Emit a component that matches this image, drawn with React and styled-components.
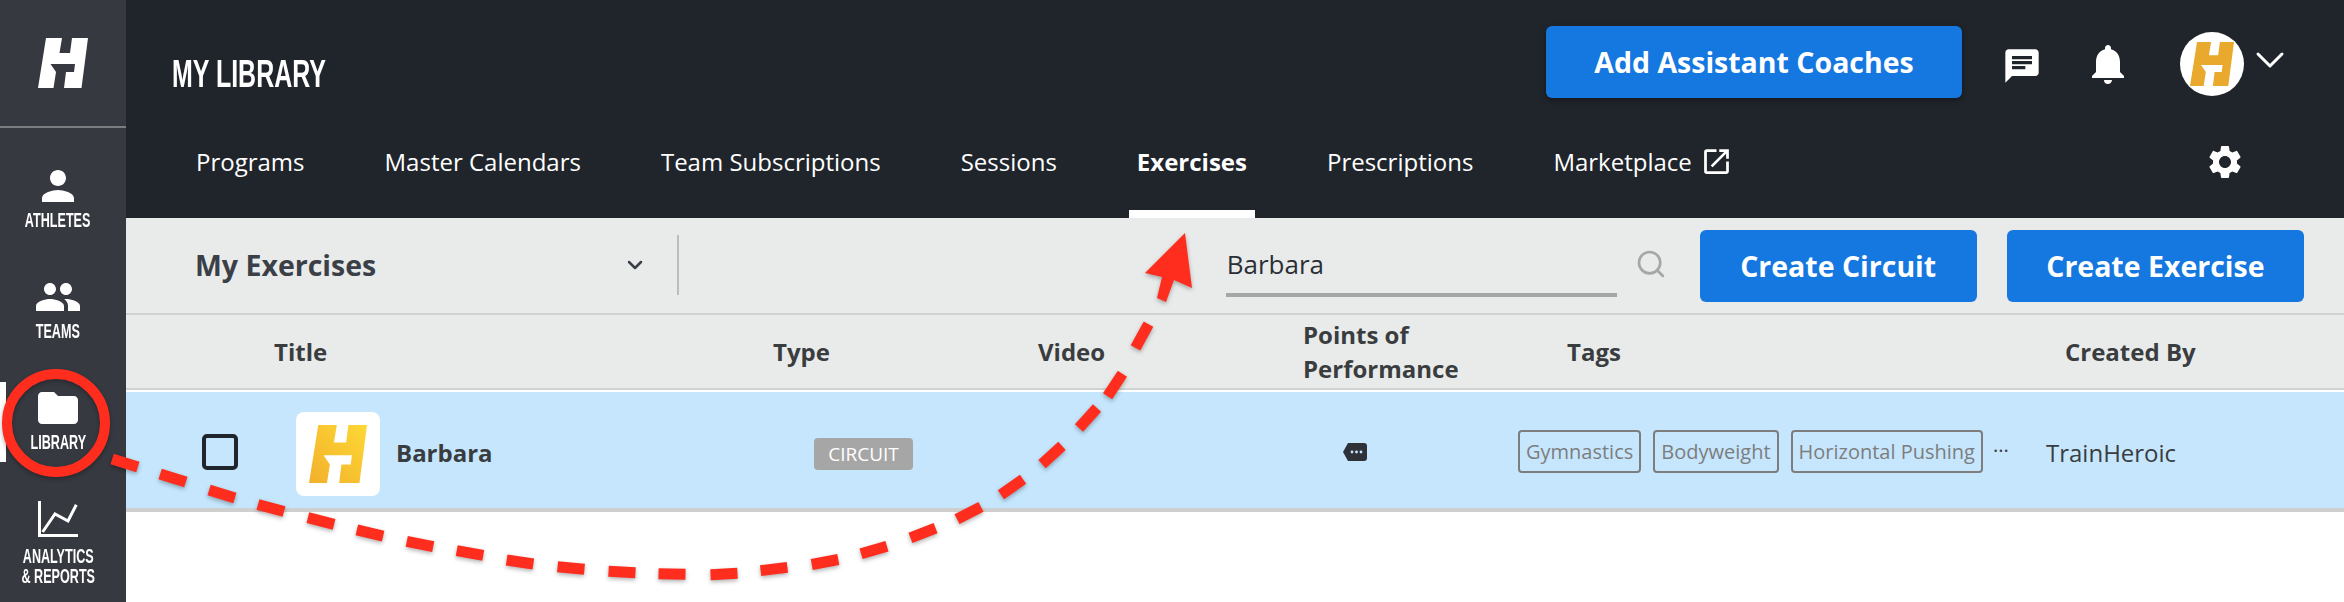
import React from "react";
import styled, { createGlobalStyle } from "styled-components";
import {
	MdChat,
	MdNotifications,
	MdPerson,
	MdPeople,
	MdFolder,
	MdSettings,
	MdOpenInNew,
} from "react-icons/md";
import { ChevronDown, Search } from "lucide-react";

const GlobalStyle = createGlobalStyle`
	html, body {
		margin: 0;
		background: #fff;
		font-family: "Open Sans", sans-serif;
	}
	* {
		box-sizing: border-box;
	}
`;

const BLUE = "#1577e0";

const Page = styled.div`
	position: relative;
	display: flex;
	width: 2344px;
	height: 602px;
	overflow: hidden;
`;

const Sidebar = styled.aside`
	flex: 0 0 126px;
	min-width: 0;
	background: #363940;
	color: #fff;
`;

const LogoCell = styled.div`
	display: flex;
	align-items: center;
	justify-content: center;
	height: 128px;
	border-bottom: 2px solid #7c7d80;
`;

const SideNav = styled.nav`
	padding-top: 34px;
`;

const SideItem = styled.div`
	position: relative;
	display: flex;
	flex-direction: column;
	align-items: center;
	height: 111px;
	padding-right: 10px;
`;

const ActiveMark = styled.span`
	position: absolute;
	left: 0;
	top: -2px;
	width: 6px;
	height: 80px;
	background: #fff;
`;

// no condensed poster font here, so the bold sans gets squeezed
const SideLabel = styled.span`
	font-family: "Liberation Sans", sans-serif;
	font-weight: 700;
	font-size: 21px;
	line-height: 20px;
	text-align: center;
	white-space: nowrap;
	transform: scaleX(0.6);
`;

const Main = styled.main`
	flex: 1;
	min-width: 0;
`;

const Header = styled.header`
	height: 218px;
	background: #20252c;
	color: #fff;
`;

const TopRow = styled.div`
	display: flex;
	justify-content: space-between;
	height: 106px;
	padding: 0 50px 0 46px;
`;

const PageTitle = styled.h1`
	margin: 0;
	padding-top: 52px;
	font-family: "Liberation Sans", sans-serif;
	font-weight: 700;
	font-size: 39px;
	line-height: 44px;
	white-space: nowrap;
	transform: scaleX(0.64);
	transform-origin: left top;
`;

const TopActions = styled.div`
	display: flex;
	align-items: center;
	height: 124px;
`;

const Button = styled.button`
	height: 72px;
	padding: 0;
	width: ${(p) => p.$width}px;
	margin-left: ${(p) => p.$left || 0}px;
	border: 0;
	border-radius: 6px;
	background: ${BLUE};
	color: #fff;
	font-family: "Open Sans", sans-serif;
	font-weight: 700;
	font-size: 28.5px;
	box-shadow: ${(p) => (p.$raised ? "0 2px 6px rgba(0, 0, 0, 0.4)" : "none")};
`;

const ChatIcon = styled(MdChat)`
	margin: 8px 0 0 40px;
`;

const BellIcon = styled(MdNotifications)`
	margin: 4px 0 0 42px;
`;

const Avatar = styled.span`
	display: flex;
	align-items: center;
	justify-content: center;
	width: 64px;
	height: 64px;
	margin: 4px 0 0 48px;
	border-radius: 50%;
	background: #fff;
`;

const AvatarChevron = styled(ChevronDown)`
	margin: -4px 0 0 2px;
`;

const TabRow = styled.nav`
	display: flex;
	align-items: flex-start;
	height: 112px;
	padding: 0 99px 0 62px;
`;

const Tab = styled.a`
	display: flex;
	align-items: center;
	gap: 8px;
	height: 112px;
	margin-right: 64px;
	padding: 6px 8px 0;
	border-bottom: 8px solid ${(p) => (p.$active ? "#fff" : "transparent")};
	font-size: 24px;
	font-weight: ${(p) => (p.$active ? 700 : 400)};
	white-space: nowrap;
`;

const GearIcon = styled(MdSettings)`
	margin: 36px 0 0 auto;
`;

const Toolbar = styled.div`
	display: flex;
	align-items: center;
	height: 97px;
	padding: 0 40px 0 69px;
	background: #e9ebea;
	border-bottom: 2px solid #d0d1d1;
`;

const LibrarySelect = styled.div`
	display: flex;
	align-items: center;
	justify-content: space-between;
	width: 485px;
	height: 60px;
	padding-right: 30px;
	margin-top: -2px;
	border-right: 2px solid #bbbcbc;
	color: #3b3f47;
	font-size: 28.5px;
	font-weight: 700;
`;

const SearchBox = styled.div`
	display: flex;
	align-items: flex-start;
	width: 392px;
	height: 64px;
	margin: -2px 0 0 547px;
	padding: 13px 0 0 1px;
	border-bottom: 4px solid #a6a6a6;
	color: #2a2f36;
	font-size: 26px;
	line-height: 36px;
`;

const SearchIcon = styled(Search)`
	margin: -4px 33px 0 18px;
	color: #a6a6a6;
`;

const ColumnRow = styled.div`
	display: flex;
	align-items: center;
	height: 75px;
	padding-left: 148px;
	background: #e9ebea;
	border-bottom: 2px solid #d0d1d1;
	color: #3a3d40;
	font-size: 24px;
	font-weight: 700;
`;

const Column = styled.div`
	flex: 0 0 ${(p) => p.$width}px;
	line-height: 34px;
`;

const DataRow = styled.div`
	display: flex;
	align-items: center;
	height: 120px;
	margin-top: 2px;
	padding: 7px 0 0 76px;
	background: #c5e6fd;
	border-bottom: 4px solid #cfcfcf;
`;

const Checkbox = styled.span`
	flex: 0 0 36px;
	height: 36px;
	margin: -4px 58px 0 0;
	border: 4px solid #20252c;
	border-radius: 5px;
`;

const Thumb = styled.span`
	display: flex;
	align-items: center;
	justify-content: center;
	flex: 0 0 84px;
	height: 84px;
	margin-right: 16px;
	border-radius: 8px;
	background: #fff;
`;

const RowName = styled.span`
	flex: 0 0 418px;
	margin-top: -2px;
	color: #3a3d40;
	font-size: 24px;
	font-weight: 700;
`;

const TypeBadge = styled.span`
	display: flex;
	align-items: center;
	justify-content: center;
	flex: 0 0 99px;
	height: 32px;
	border-radius: 4px;
	background: #a6a6a6;
	color: #fff;
	font-size: 19px;
`;

const NoteCell = styled.span`
	display: flex;
	flex: 0 0 175px;
	margin: -4px 0 0 430px;
`;

const TagList = styled.div`
	display: flex;
	align-items: center;
	gap: 12px;
	flex: 0 0 528px;
	margin-top: -4px;
`;

const Tag = styled.span`
	display: flex;
	align-items: center;
	height: 43px;
	padding: 0 6px;
	border: 2px solid #7d7d7d;
	border-radius: 4px;
	color: #7d7d7d;
	font-size: 20px;
	white-space: nowrap;
`;

const MoreDots = styled.span`
	margin: -14px 0 0 -2px;
	color: #3a3d40;
	font-size: 20px;
`;

const CreatedBy = styled.span`
	margin-top: -2px;
	color: #3a3d40;
	font-size: 24px;
`;

const Annotation = styled.svg`
	position: absolute;
	left: 0;
	top: 0;
	pointer-events: none;
	filter: drop-shadow(0 2px 2px rgba(0, 0, 0, 0.3));
`;

// the big H, used white in the sidebar and coloured on the thumbs
const HMark = ({ size, fill, glow }) => (
	<svg width={size} height={size} viewBox="0 0 100 100">
		{glow && (
			<defs>
				<linearGradient id="hGlow" x1="0" y1="1" x2="1" y2="0">
					<stop offset="0" stopColor="#f2b02c" />
					<stop offset="1" stopColor="#fdd835" />
				</linearGradient>
			</defs>
		)}
		<polygon
			fill={glow ? "url(#hGlow)" : fill}
			points="0,100 16,0 48,0 43,30 64,30 68,0 100,0 87,100 52,100 56,68 72,68 74,52 25,52 36,68 31,100"
		/>
	</svg>
);

const ChartIcon = () => (
	<svg width="48" height="51" viewBox="0 0 48 51" fill="none" stroke="#fff" strokeWidth="3">
		<polyline points="5.5,6 5.5,40.5 44,40.5" />
		<polyline points="8.6,37 21,19 34,26 42.3,9.7" />
	</svg>
);

const NoteIcon = () => (
	<svg width="24" height="18" viewBox="0 0 24 18">
		<path d="M5 0H21a3 3 0 0 1 3 3V15a3 3 0 0 1-3 3H5L0 9Z" fill="#2e3138" />
		<circle cx="9" cy="9" r="1.4" fill="#c5e6fd" />
		<circle cx="13.5" cy="9" r="1.4" fill="#c5e6fd" />
		<circle cx="18" cy="9" r="1.4" fill="#c5e6fd" />
	</svg>
);

const dashCenters = [
	[125, 463], [173, 478], [222, 494], [271, 508], [321, 521], [370, 533], [420, 544],
	[470, 553], [520, 562], [571, 568], [622, 572], [672, 574], [724, 574], [774, 569],
	[825, 562], [874, 550], [923, 533], [969, 513], [1012, 487], [1052, 455], [1088, 418],
	[1115, 385], [1142, 336],
];

const Dashes = () =>
	dashCenters.map(([x, y], i) => {
		const [ax, ay] = dashCenters[Math.max(i - 1, 0)];
		const [bx, by] = dashCenters[Math.min(i + 1, dashCenters.length - 1)];
		const len = Math.hypot(bx - ax, by - ay);
		const dx = ((bx - ax) / len) * 13.5;
		const dy = ((by - ay) / len) * 13.5;
		return <line key={i} x1={x - dx} y1={y - dy} x2={x + dx} y2={y + dy} />;
	});

const App = () => {
	return (
		<Page>
			<GlobalStyle />
			<Sidebar>
				<LogoCell>
					<HMark size={50} fill="#fff" />
				</LogoCell>
				<SideNav>
					<SideItem>
						<MdPerson size={48} />
						<SideLabel>ATHLETES</SideLabel>
					</SideItem>
					<SideItem>
						<MdPeople size={48} />
						<SideLabel>TEAMS</SideLabel>
					</SideItem>
					<SideItem>
						<ActiveMark />
						<MdFolder size={48} />
						<SideLabel>LIBRARY</SideLabel>
					</SideItem>
					<SideItem>
						<ChartIcon />
						<SideLabel>
							ANALYTICS
							<br />& REPORTS
						</SideLabel>
					</SideItem>
				</SideNav>
			</Sidebar>
			<Main>
				<Header>
					<TopRow>
						<PageTitle>MY LIBRARY</PageTitle>
						<TopActions>
							<Button $width={416} $raised>
								Add Assistant Coaches
							</Button>
							<ChatIcon size={40} />
							<BellIcon size={48} />
							<Avatar>
								<HMark size={44} fill="#e8a92c" />
							</Avatar>
							<AvatarChevron size={48} strokeWidth={1.5} />
						</TopActions>
					</TopRow>
					<TabRow>
						<Tab>Programs</Tab>
						<Tab>Master Calendars</Tab>
						<Tab>Team Subscriptions</Tab>
						<Tab>Sessions</Tab>
						<Tab $active>Exercises</Tab>
						<Tab>Prescriptions</Tab>
						<Tab>
							Marketplace
							<MdOpenInNew size={33} />
						</Tab>
						<GearIcon size={40} />
					</TabRow>
				</Header>
				<Toolbar>
					<LibrarySelect>
						My Exercises
						<ChevronDown size={24} strokeWidth={2.5} />
					</LibrarySelect>
					<SearchBox>Barbara</SearchBox>
					<SearchIcon size={32} strokeWidth={2} />
					<Button $width={278}>Create Circuit</Button>
					<Button $width={298} $left={30}>
						Create Exercise
					</Button>
				</Toolbar>
				<ColumnRow>
					<Column $width={499}>Title</Column>
					<Column $width={265}>Type</Column>
					<Column $width={265}>Video</Column>
					<Column $width={264}>
						Points of
						<br />
						Performance
					</Column>
					<Column $width={498}>Tags</Column>
					<Column $width={200}>Created By</Column>
				</ColumnRow>
				<DataRow>
					<Checkbox />
					<Thumb>
						<HMark size={58} glow />
					</Thumb>
					<RowName>Barbara</RowName>
					<TypeBadge>CIRCUIT</TypeBadge>
					<NoteCell>
						<NoteIcon />
					</NoteCell>
					<TagList>
						<Tag>Gymnastics</Tag>
						<Tag>Bodyweight</Tag>
						<Tag>Horizontal Pushing</Tag>
						<MoreDots>...</MoreDots>
					</TagList>
					<CreatedBy>TrainHeroic</CreatedBy>
				</DataRow>
			</Main>
			<Annotation width="2344" height="602" viewBox="0 0 2344 602">
				<circle cx="56" cy="423" r="49" fill="none" stroke="#ff2d1e" strokeWidth="10" />
				<g stroke="#ff2d1e" strokeWidth="11">
					<Dashes />
				</g>
				<polygon
					fill="#ff2d1e"
					points="1185,233 1145,273 1162,277 1157,298 1166,302 1174,280 1192,288"
				/>
			</Annotation>
		</Page>
	);
};

export default App;
